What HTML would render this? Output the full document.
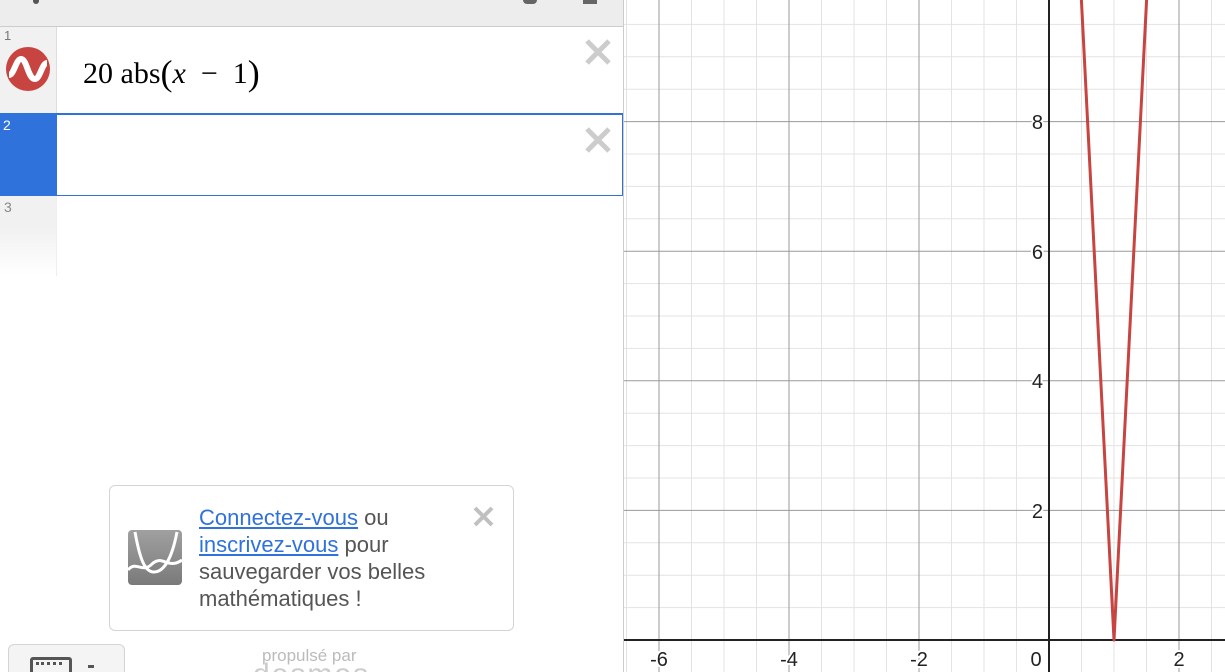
<!DOCTYPE html>
<html><head><meta charset="utf-8"><style>
html,body{margin:0;width:1225px;height:672px;overflow:hidden}
body{background:#fff;font-family:"Liberation Sans",sans-serif;position:relative}
.abs{position:absolute}
</style></head><body>
<svg class="abs" style="left:0;top:0" width="1225" height="672">
<g stroke="#e3e3e3" stroke-width="1">
<line x1="626.5" y1="0" x2="626.5" y2="672"/><line x1="691.5" y1="0" x2="691.5" y2="672"/><line x1="724" y1="0" x2="724" y2="672"/><line x1="756.5" y1="0" x2="756.5" y2="672"/><line x1="821.5" y1="0" x2="821.5" y2="672"/><line x1="854" y1="0" x2="854" y2="672"/><line x1="886.5" y1="0" x2="886.5" y2="672"/><line x1="951.5" y1="0" x2="951.5" y2="672"/><line x1="984" y1="0" x2="984" y2="672"/><line x1="1016.5" y1="0" x2="1016.5" y2="672"/><line x1="1081.5" y1="0" x2="1081.5" y2="672"/><line x1="1114" y1="0" x2="1114" y2="672"/><line x1="1146.5" y1="0" x2="1146.5" y2="672"/><line x1="1211.5" y1="0" x2="1211.5" y2="672"/>
<line x1="623" y1="24.4" x2="1225" y2="24.4"/><line x1="623" y1="56.8" x2="1225" y2="56.8"/><line x1="623" y1="89.2" x2="1225" y2="89.2"/><line x1="623" y1="154" x2="1225" y2="154"/><line x1="623" y1="186.4" x2="1225" y2="186.4"/><line x1="623" y1="218.8" x2="1225" y2="218.8"/><line x1="623" y1="283.6" x2="1225" y2="283.6"/><line x1="623" y1="316" x2="1225" y2="316"/><line x1="623" y1="348.4" x2="1225" y2="348.4"/><line x1="623" y1="413.2" x2="1225" y2="413.2"/><line x1="623" y1="445.6" x2="1225" y2="445.6"/><line x1="623" y1="478" x2="1225" y2="478"/><line x1="623" y1="542.8" x2="1225" y2="542.8"/><line x1="623" y1="575.2" x2="1225" y2="575.2"/><line x1="623" y1="607.6" x2="1225" y2="607.6"/>
</g>
<g stroke="#9a9a9a" stroke-width="1">
<line x1="659" y1="0" x2="659" y2="672"/><line x1="789" y1="0" x2="789" y2="672"/><line x1="919" y1="0" x2="919" y2="672"/><line x1="1179" y1="0" x2="1179" y2="672"/>
<line x1="623" y1="121.6" x2="1225" y2="121.6"/><line x1="623" y1="251.2" x2="1225" y2="251.2"/><line x1="623" y1="380.8" x2="1225" y2="380.8"/><line x1="623" y1="510.4" x2="1225" y2="510.4"/>
</g>
<g stroke="#222" stroke-width="2"><line x1="1049" y1="0" x2="1049" y2="672"/><line x1="623" y1="640" x2="1225" y2="640"/></g>
<polyline points="1081,-8 1114,640 1147,-8" fill="none" stroke="#c74440" stroke-width="3" stroke-linejoin="round"/>
<g font-family="Liberation Sans,sans-serif" font-size="20" fill="#222" stroke="#fff" stroke-width="4" paint-order="stroke">
<text x="659" y="666" text-anchor="middle">-6</text><text x="789" y="666" text-anchor="middle">-4</text><text x="919" y="666" text-anchor="middle">-2</text><text x="1036" y="666" text-anchor="middle">0</text><text x="1179" y="666" text-anchor="middle">2</text>
<text x="1043" y="129" text-anchor="end">8</text><text x="1043" y="259" text-anchor="end">6</text><text x="1043" y="388" text-anchor="end">4</text><text x="1043" y="518" text-anchor="end">2</text>
</g>
</svg>
<div class="abs" style="left:0;top:0;width:623px;height:672px;background:#fff;border-right:1px solid #ccc"></div>
<div class="abs" style="left:0;top:0;width:623px;height:26px;background:#ededed;border-bottom:1px solid #ccc"></div>
<div class="abs" style="left:33px;top:0;width:6px;height:4px;background:#555;border-radius:0 0 3px 3px"></div>
<div class="abs" style="left:523px;top:0;width:14px;height:4px;background:#666;border-radius:0 0 4px 4px"></div>
<div class="abs" style="left:583px;top:0;width:14px;height:4px;background:#666"></div>
<div class="abs" style="left:0;top:27px;width:56px;height:86px;background:#f1f1f1;border-right:1px solid #ddd"></div>
<div class="abs" style="left:4px;top:28px;font-size:13px;color:#777">1</div>
<svg class="abs" style="left:6px;top:47px" width="44" height="44"><circle cx="22" cy="22" r="22" fill="#c74440"/><path d="M3 28 C8 28 10 12 15 12 C21 12 22 32 29 32 C34 32 36 16 41 16" fill="none" stroke="#fff" stroke-width="6"/></svg>
<div class="abs" style="left:83px;top:50px;font-family:'Liberation Serif',serif;font-size:30px;color:#000;white-space:nowrap">20 abs<span style="font-size:36px;position:relative;top:2px">(</span><i>x</i> &nbsp;−&nbsp; 1<span style="font-size:36px;position:relative;top:2px">)</span></div>
<svg class="abs" style="left:584px;top:38px" width="28" height="28"><path d="M3 3L25 25M25 3L3 25" stroke="#ccc" stroke-width="5"/></svg>
<div class="abs" style="left:0;top:113px;width:621px;height:80px;border:1px solid #2f72dc;border-top-width:2px"></div>
<div class="abs" style="left:0;top:113px;width:57px;height:83px;background:#2f72dc"></div>
<div class="abs" style="left:3px;top:117px;font-size:14px;color:#fff">2</div>
<svg class="abs" style="left:584px;top:126px" width="28" height="28"><path d="M3 3L25 25M25 3L3 25" stroke="#ccc" stroke-width="5"/></svg>
<div class="abs" style="left:0;top:196px;width:56px;height:80px;background:linear-gradient(#f1f1f1 40%,#fff);border-right:1px solid #eee"></div>
<div class="abs" style="left:4px;top:199px;font-size:14px;color:#888">3</div>
<div class="abs" style="left:109px;top:485px;width:403px;height:144px;border:1px solid #d4d4d4;border-radius:6px;background:#fff"></div>
<svg class="abs" style="left:128px;top:530px" width="54" height="55"><defs><linearGradient id="g" x1="0" y1="0" x2="0" y2="1"><stop offset="0" stop-color="#a0a0a0"/><stop offset="1" stop-color="#7a7a7a"/></linearGradient></defs><rect width="54" height="55" rx="4" fill="url(#g)"/><path d="M7 2 C12 30 17 42 26 42 C36 42 44 28 49 2" fill="none" stroke="#fff" stroke-width="3"/><path d="M0 40 C8 30 14 44 24 34 C34 24 40 40 54 30" fill="none" stroke="#fff" stroke-width="3"/></svg>
<div class="abs" style="left:199px;top:504px;width:290px;font-size:22px;line-height:27px;color:#555;white-space:nowrap">
<span style="color:#2f72dc;text-decoration:underline">Connectez-vous</span> ou<br><span style="color:#2f72dc;text-decoration:underline">inscrivez-vous</span> pour<br>sauvegarder vos belles<br>mathématiques !</div>
<svg class="abs" style="left:473px;top:506px" width="21" height="21"><path d="M2 2L19 19M19 2L2 19" stroke="#c0c0c0" stroke-width="4"/></svg>
<div class="abs" style="left:8px;top:644px;width:115px;height:40px;border:1px solid #d4d4d4;border-radius:6px;background:#f4f4f4"></div>
<div class="abs" style="left:30px;top:657px;width:36px;height:20px;border:3px solid #555;border-radius:3px"></div>
<div class="abs" style="left:36px;top:662px;width:26px;height:3px;border-top:3px dotted #555"></div>
<div class="abs" style="left:88px;top:665px;width:6px;height:3px;background:#555"></div>
<div class="abs" style="left:262px;top:646px;font-size:17px;color:#bbb">propulsé par</div>
<div class="abs" style="left:253px;top:658px;font-size:30px;color:#ccc;letter-spacing:2px">desmos</div>
</body></html>
